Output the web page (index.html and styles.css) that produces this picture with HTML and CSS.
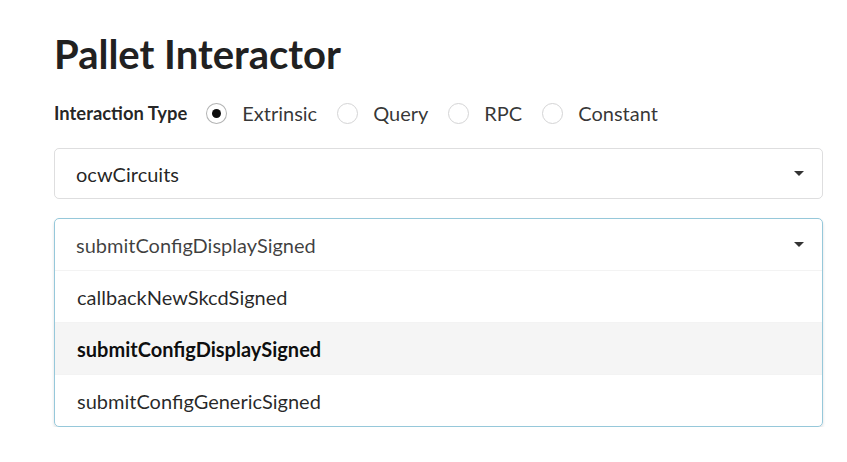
FILE: index.html
```html
<!DOCTYPE html>
<html>
<head>
<meta charset="utf-8">
<link rel="stylesheet" href="styles.css">
</head>
<body>
<div class="page">
  <h1 class="title">Pallet Interactor</h1>
  <div class="type-row">
    <span class="type-label">Interaction Type</span>
    <label class="radio checked"><span class="circle"></span><span class="radio-text">Extrinsic</span></label>
    <label class="radio"><span class="circle"></span><span class="radio-text">Query</span></label>
    <label class="radio"><span class="circle"></span><span class="radio-text">RPC</span></label>
    <label class="radio"><span class="circle"></span><span class="radio-text">Constant</span></label>
  </div>
  <div class="dropdown">
    <span class="dd-text">ocwCircuits</span>
    <span class="caret"></span>
  </div>
  <div class="dropdown active">
    <div class="dd-head">
      <span class="dd-text">submitConfigDisplaySigned</span>
      <span class="caret"></span>
    </div>
    <div class="menu">
      <div class="item">callbackNewSkcdSigned</div>
      <div class="item selected">submitConfigDisplaySigned</div>
      <div class="item">submitConfigGenericSigned</div>
    </div>
  </div>
</div>
</body>
</html>
```
FILE: styles.css
```css
html, body {
  margin: 0;
  padding: 0;
  background: #fff;
}
body {
  font-family: Lato, "Liberation Sans", sans-serif;
  color: rgba(0,0,0,0.87);
}
.page {
  width: 769px;
  padding: 28px 0 0 54px;
}
.title {
  margin: 0;
  font-size: 40px;
  font-weight: 700;
  line-height: 52px;
  color: #212121;
}
.type-row {
  display: flex;
  align-items: center;
  margin-top: 19px;
  height: 28px;
}
.type-label {
  font-size: 18.4px;
  font-weight: 700;
  margin-right: 19px;
  color: rgba(0,0,0,0.87);
}
.radio {
  display: flex;
  align-items: center;
  margin-right: 20px;
}
.circle {
  width: 21px;
  height: 21px;
  border: 1px solid #d4d4d5;
  border-radius: 50%;
  box-sizing: border-box;
  display: flex;
  align-items: center;
  justify-content: center;
  background: #fff;
}
.checked .circle {
  border-color: rgba(34,36,38,0.35);
}
.checked .circle::after {
  content: "";
  width: 9px;
  height: 9px;
  border-radius: 50%;
  background: rgba(0,0,0,0.95);
}
.radio-text {
  font-size: 20px;
  margin-left: 15px;
  color: rgba(0,0,0,0.8);
}
.dropdown {
  margin-top: 21px;
  border: 1px solid rgba(34,36,38,0.15);
  border-radius: 5px;
  height: 51px;
  box-sizing: border-box;
  display: flex;
  align-items: center;
  padding: 0 18px 0 21px;
  font-size: 20px;
}
.dd-text {
  flex: 1;
  color: rgba(0,0,0,0.87);
}
.caret {
  width: 0;
  height: 0;
  border-left: 5px solid transparent;
  border-right: 5px solid transparent;
  border-top: 5px solid rgba(0,0,0,0.8);
}
.dropdown.active {
  display: block;
  height: auto;
  padding: 0;
  border-color: #96c8da;
  box-shadow: 0 2px 3px 0 rgba(34,36,38,0.15);
  margin-top: 19px;
}
.dd-head {
  display: flex;
  align-items: center;
  height: 51px;
  padding: 0 18px 0 21px;
}
.dd-head .dd-text {
  color: rgba(0,0,0,0.75);
}
.menu {
  display: flex;
  flex-direction: column;
}
.item {
  border-top: 1px solid #f3f3f3;
  height: 52px;
  box-sizing: border-box;
  display: flex;
  align-items: center;
  padding-left: 22px;
  color: rgba(0,0,0,0.85);
}
.item.selected {
  background: rgba(0,0,0,0.04);
  font-weight: 700;
  color: rgba(0,0,0,0.95);
}
```
